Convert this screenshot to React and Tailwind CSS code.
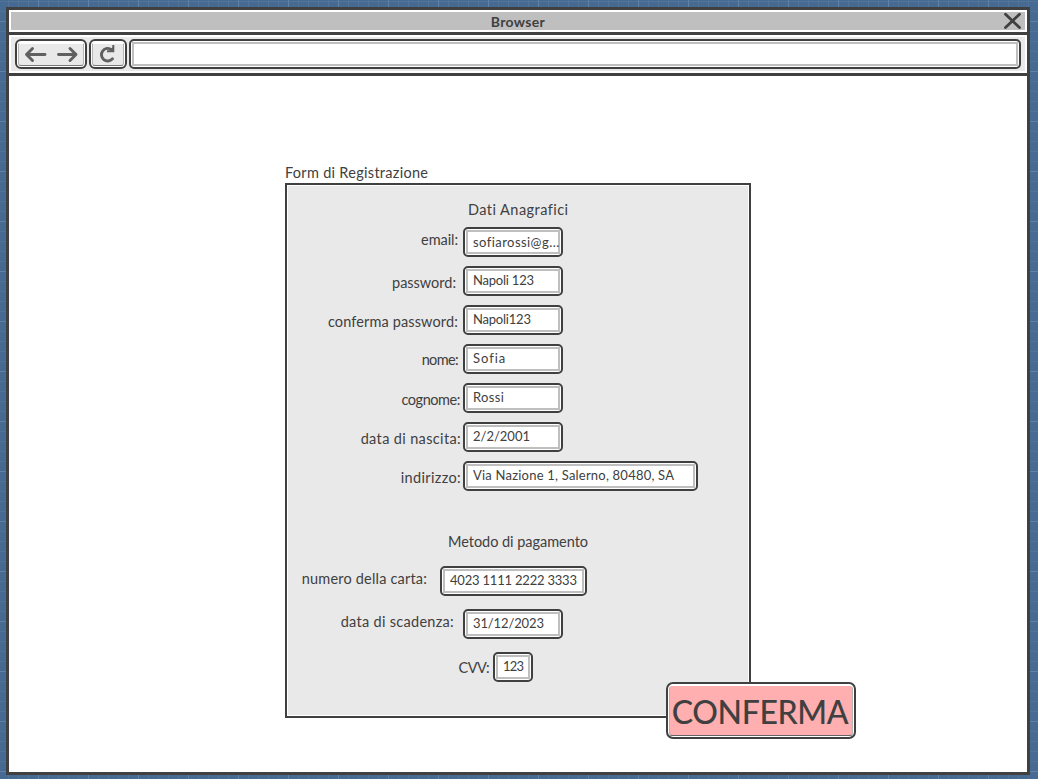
import { useLayoutEffect, useRef, useState } from "react";

// Spreads a line of text evenly over the given width.
function Line({ children, width, className = "" }) {
  const ref = useRef(null);
  const [spacing, setSpacing] = useState(0);
  useLayoutEffect(() => {
    const natural = ref.current.getBoundingClientRect().width;
    setSpacing((width - natural) / (children.length - 1));
  }, [children, width]);
  return (
    <span ref={ref} className={`inline-block whitespace-pre ${className}`} style={{ letterSpacing: spacing }}>
      {children}
    </span>
  );
}

const fields = [
  { label: "email:", lw: 37, pad: "pr-[5px] pt-[2px]", value: "sofiarossi@g...", vw: 86, inner: "pt-px", box: "w-[100px]" },
  { label: "password:", lw: 64, pad: "pr-[7px] pt-[6px]", value: "Napoli 123", vw: 61, box: "w-[100px]" },
  { label: "conferma password:", lw: 130, pad: "pr-[5px] pt-[6px]", value: "Napoli123", vw: 58, box: "w-[100px]" },
  { label: "nome:", lw: 37, pad: "pr-[5px] pt-[5px]", value: "Sofia", vw: 32, box: "w-[100px]" },
  { label: "cognome:", lw: 59, pad: "pr-[3px] pt-[6px]", value: "Rossi", vw: 31, box: "w-[100px]" },
  { label: "data di nascita:", lw: 100, pad: "pr-[2px] pt-[6px]", value: "2/2/2001", vw: 57, box: "w-[100px]" },
  { label: "indirizzo:", lw: 60, pad: "pr-[2px] pt-[6px]", value: "Via Nazione 1, Salerno, 80480, SA", vw: 201, box: "w-[235px]" },
];

function Field({ label, lw, pad, value, vw, box, inner = "", col = "w-[175px]" }) {
  return (
    <div className="flex h-[30px] items-start">
      <label className={`flex shrink-0 justify-end text-[14.5px] leading-[22px] ${col} ${pad}`}>
        <Line width={lw}>{label}</Line>
      </label>
      <div className={`h-[30px] shrink-0 rounded-[5px] border-2 border-[#404040] bg-white p-px ${box}`}>
        <div className={`flex h-6 items-start border-2 border-[#bfbfbf] pl-[5px] text-[13px] leading-[19px] ${inner}`}>
          <Line width={vw}>{value}</Line>
        </div>
      </div>
    </div>
  );
}

function ToolButton({ children, className }) {
  return (
    <button className={`h-[30px] rounded-[6px] border-2 border-[#404040] bg-white p-px ${className}`}>
      <span className="flex h-6 items-center justify-center rounded-[3px] border-x border-b border-t-2 border-x-[#b5b5b5] border-t-white border-b-[#777] bg-[#e9e9e9]">
        {children}
      </span>
    </button>
  );
}

function Backdrop({ children }) {
  return (
    <div className="relative h-[779px] w-[1038px] overflow-hidden bg-[#476a92] pt-[7px] pl-[6px]">
      <svg className="absolute inset-0" width="1038" height="779" shapeRendering="crispEdges">
        <defs>
          <pattern id="fine" width="10" height="10" patternUnits="userSpaceOnUse">
            <path d="M8 0h1v10h-1zM0 1h10v1H0z" fill="#527499" />
          </pattern>
          <pattern id="major" width="50" height="50" patternUnits="userSpaceOnUse">
            <path d="M38 0h1v50h-1zM0 21h50v1H0z" fill="#6282a5" />
          </pattern>
        </defs>
        <rect width="1038" height="779" fill="url(#fine)" />
        <rect width="1038" height="779" fill="url(#major)" />
      </svg>
      {children}
    </div>
  );
}

export default function App() {
  return (
    <Backdrop>
      <div className="relative flex h-[768px] w-[1024px] flex-col border-[3px] border-[#404040] bg-white font-['Lato',sans-serif] text-[#404040]">
        <header className="h-[25px] border-b-[3px] border-[#404040] p-[2px]">
          <div className="flex h-[18px] items-center bg-[#bfbfbf] pr-[4px]">
            <h1 className="flex-1 pt-[2px] pl-[22px] text-center text-[14px] leading-[18px] font-bold">
              <Line width={54}>Browser</Line>
            </h1>
            <svg width="18" height="18" viewBox="0 0 18 18" fill="none" stroke="#404040" strokeWidth="2.8" strokeLinecap="round">
              <path d="M2.500 2.2 16.500 15.6M16.500 2.2 2.500 15.6" />
            </svg>
          </div>
        </header>
        <nav className="h-[41px] border-b-[3px] border-[#404040] p-[2px]">
          <div className="flex h-[34px] gap-[2px] bg-[#e9e9e9] px-[4px] pt-[2px]">
            <ToolButton className="w-[72px]">
              <svg width="60" height="20" viewBox="0 0 60 20" fill="none" stroke="#606060" strokeWidth="2.9" strokeLinecap="round" strokeLinejoin="round">
                <path d="M24 9.500H5.500M11.500 3.500 5.500 9.500l6 6M37.500 9.500h17.500M49 3.500l6 6-6 6" />
              </svg>
            </ToolButton>
            <ToolButton className="w-[38px]">
              <svg width="20" height="20" viewBox="0 0 20 20" fill="none" stroke="#606060" strokeWidth="2.9">
                <path d="M14.500 13.800A6.300 6.300 0 1 1 13.500 4.600" strokeLinecap="round" />
                <path d="M15.300 0V6.200H9" strokeWidth="2" />
                <path d="M11.500 5.700 15 2.200v3.500z" fill="#606060" strokeWidth="0.500" />
              </svg>
            </ToolButton>
            <div className="h-[30px] w-[892px] rounded-[5px] border-2 border-[#404040] bg-white p-px">
              <div className="h-6 border-2 border-[#bfbfbf]" />
            </div>
          </div>
        </nav>
        <main className="pt-[86px] pl-[276px]">
          <div className="h-[21px] text-[14.5px] leading-[22px]">
            <Line width={143}>Form di Registrazione</Line>
          </div>
          <div className="relative h-[535px] w-[466px] border-2 border-[#404040] bg-white p-px">
            <form className="h-full bg-[#e9e9e9] pt-[13px]">
              <h2 className="h-5 pl-[180px] text-[14.5px] leading-[22px]">
                <Line width={100}>Dati Anagrafici</Line>
              </h2>
              <div className="mt-[8px] flex flex-col gap-[9px]">
                {fields.map((f) => (
                  <Field key={f.label} {...f} />
                ))}
              </div>
              <h2 className="mt-[40px] h-5 pl-[160px] text-[14.5px] leading-[22px]">
                <Line width={140}>Metodo di pagamento</Line>
              </h2>
              <div className="mt-[15px] flex flex-col gap-[13px]">
                <Field label="numero della carta:" lw={125} pad="pr-[13px] pt-[2px]" col="w-[152px]" value="4023 1111 2222 3333" vw={127} box="w-[147px]" />
                <Field label="data di scadenza:" lw={113} pad="pr-[9px] pt-[2px]" value="31/12/2023" vw={71} box="w-[100px]" />
                <Field label="CVV:" lw={31} pad="pr-[4px] pt-[5px]" col="w-[205px]" value="123" vw={21} box="w-[40px]" />
              </div>
            </form>
            <button className="absolute top-[497px] left-[379px] h-[57px] w-[190px] rounded-[7px] border-2 border-[#404040] bg-white p-px pt-[2px]">
              <span className="flex h-[50px] items-center justify-center rounded-[3px] border border-x-[#b5b5b5] border-t-[#ffafaf] border-b-[#666] bg-[#ffafaf] pt-[2px] pr-[2px] text-[32px] leading-[50px] font-medium">
                <Line width={177}>CONFERMA</Line>
              </span>
            </button>
          </div>
        </main>
      </div>
    </Backdrop>
  );
}
